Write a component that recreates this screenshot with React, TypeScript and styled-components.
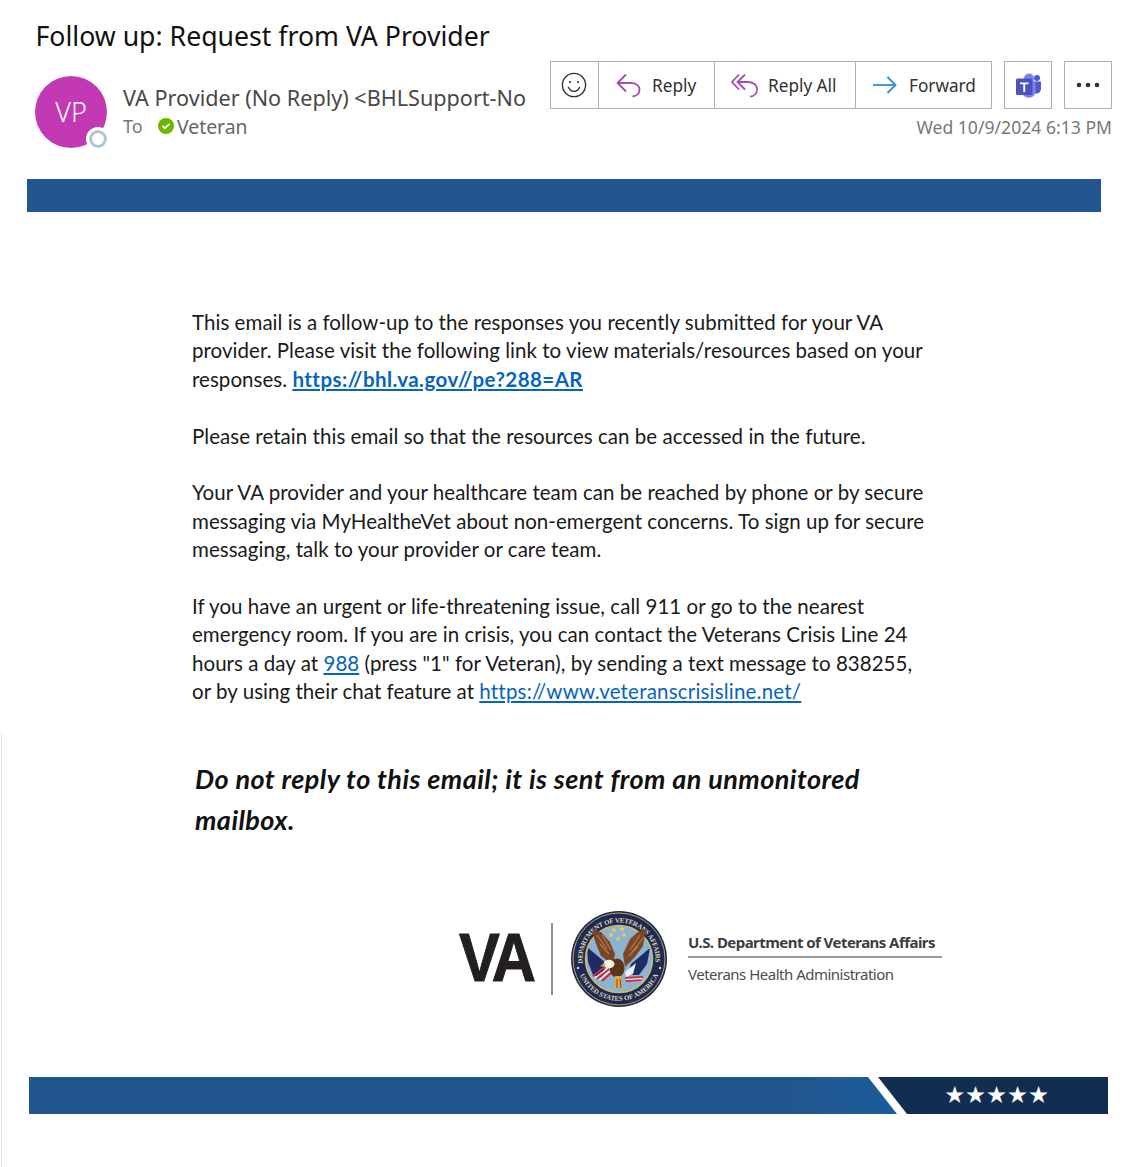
import { FC } from 'react'
import styled, { createGlobalStyle } from 'styled-components'

const GlobalStyle = createGlobalStyle`
  * { box-sizing: border-box; }
  html, body { margin: 0; padding: 0; background: #fff; }
  body { font-family: "Noto Sans", "Open Sans", sans-serif; }
`

const SmileIcon: FC = () => (
  <svg width="26" height="26" viewBox="0 0 26 26" fill="none" stroke="#323130" strokeWidth="1.4">
    <circle cx="13" cy="13" r="11.6" />
    <circle cx="9" cy="10" r="1.1" fill="#323130" stroke="none" />
    <circle cx="17" cy="10" r="1.1" fill="#323130" stroke="none" />
    <path d="M7.5 15.5c1.2 2.6 3.2 3.8 5.5 3.8s4.300-1.200 5.500-3.800" strokeLinecap="round" />
  </svg>
)

const ReplyIcon: FC = () => (
  <svg width="25" height="25" viewBox="0 0 25 25" fill="none" stroke="#a64ab5" strokeWidth="1.8">
    <path d="M10 1.500 1.500 10l8.500 8.500" />
    <path d="M1.500 10h13c5 0 9 2.400 9 6.800 0 3.700-3 6.300-7 6.700" />
  </svg>
)

const ReplyAllIcon: FC = () => (
  <svg width="27" height="25" viewBox="0 0 27 25" fill="none" stroke="#a64ab5" strokeWidth="1.8">
    <path d="M8 1.500 1 9l7 7.500" />
    <path d="M14 1.500 6.500 9l7.500 7.500" />
    <path d="M6.500 9h10c5.500 0 9.500 2.800 9.500 7.500 0 4-3 6.800-7 7.200" />
  </svg>
)

const ForwardIcon: FC = () => (
  <svg width="24" height="18" viewBox="0 0 24 18" fill="none" stroke="#2b8fd6" strokeWidth="1.8">
    <path d="M0 9h22.500" />
    <path d="M14.500 1l8 8-8 8" />
  </svg>
)

const TeamsIcon: FC = () => (
  <svg width="25" height="25" viewBox="0 0 25 25">
    <circle cx="21" cy="5" r="3" fill="#5059c9" />
    <path d="M16 8.500h8c.6 0 1 .4 1 1v6c0 3-2.200 5-4.500 5S16 18.500 16 16z" fill="#5059c9" />
    <circle cx="13" cy="5.500" r="5" fill="#7b83eb" />
    <path d="M6 8.500h13.500v10c0 3.500-3 6.200-6.700 6.200S6 22 6 18.500z" fill="#7b83eb" />
    <rect x="0" y="5.500" width="16.500" height="16.500" rx="1.500" fill="#4b53bc" />
    <path d="M4 9.500h8.500v1.700H9.200V19H7.300v-7.800H4z" fill="#fff" />
  </svg>
)

const DotsIcon: FC = () => (
  <svg width="24" height="6" viewBox="0 0 24 6" fill="#323130">
    <circle cx="3" cy="3" r="2.300" />
    <circle cx="12" cy="3" r="2.300" />
    <circle cx="21" cy="3" r="2.300" />
  </svg>
)

const starPoints = (cx: number, cy: number, r: number) =>
  Array.from({ length: 10 }, (_, i) => {
    const rad = i % 2 === 0 ? r : r * 0.42
    const a = (Math.PI / 5) * i - Math.PI / 2
    return `${(cx + rad * Math.cos(a)).toFixed(2)},${(cy + rad * Math.sin(a)).toFixed(2)}`
  }).join(' ')

const Seal: FC = () => (
  <svg width="96" height="102" viewBox="0 0 96 102">
    <defs>
      <path id="sealTop" d="M12.050 57.300A36.500 36.500 0 1 1 83.950 57.300" />
      <path id="sealBottom" d="M8.300 65.500A42.500 42.500 0 0 0 87.700 65.500" />
      <clipPath id="sealField">
        <circle cx="48" cy="51" r="32.500" />
      </clipPath>
    </defs>
    <circle cx="48" cy="51" r="48" fill="#1b2a57" />
    <circle cx="48" cy="51" r="46" fill="none" stroke="#c4a545" strokeWidth="1" />
    <circle cx="48" cy="51" r="33.500" fill="#8db3d2" stroke="#d3bb62" strokeWidth="1.500" />
    <text fontFamily="Liberation Serif, serif" fontSize="6.800" fontWeight="700" fill="#e8dca6">
      <textPath href="#sealTop" startOffset="2" textLength="122">
        DEPARTMENT OF VETERANS AFFAIRS
      </textPath>
    </text>
    <text fontFamily="Liberation Serif, serif" fontSize="6.800" fontWeight="700" fill="#e8dca6" textAnchor="middle">
      <textPath href="#sealBottom" startOffset="50%">
        UNITED STATES OF AMERICA
      </textPath>
    </text>
    <circle cx="7" cy="60" r="1.200" fill="#e8dca6" />
    <circle cx="89" cy="60" r="1.200" fill="#e8dca6" />
    {[
      [43, 22],
      [51, 21],
      [40, 27],
      [53, 27],
      [47, 31],
    ].map(([x, y]) => (
      <polygon key={`${x}-${y}`} points={starPoints(x, y, 2.800)} fill="#ecd34f" />
    ))}
    <g clipPath="url(#sealField)">
      <polygon points="16,39 35,55 31,70 22,67 17,54" fill="#1e2b66" />
      <polygon points="79,40 76,56 68,67 57,67 60,56" fill="#1e2b66" />
      <path d="M22 68l13-10M26 71l12-10M31 73l10-9" stroke="#c9303a" strokeWidth="2.200" />
      <path d="M24 70l13-10M28 72l12-10" stroke="#f3f1f0" strokeWidth="1.400" />
      <path d="M54 70l18-1M55 73l15-1" stroke="#c9303a" strokeWidth="2" />
      <path d="M55 71.500l16-1" stroke="#f3f1f0" strokeWidth="1" />
    </g>
    <polygon points="21,23 30,24 39,34 44,46 42,57 30,48 25,36" fill="#7a4524" />
    <polygon points="75,21 72,38 64,49 54,59 52,46 59,31 67,24" fill="#7d4726" />
    <path d="M26 27l10 14M31 27l9 15M29 36l9 10M69 27l-10 15M73 29l-12 15M67 38l-9 10" stroke="#b27a4c" strokeWidth="1.200" />
    <ellipse cx="46" cy="60" rx="7.500" ry="9.500" fill="#5e3319" />
    <ellipse cx="38" cy="56" rx="5.500" ry="4.200" fill="#f4f1ea" />
    <polygon points="34,55 29,58 34,59" fill="#d9a92e" />
    <polygon points="54,64 65,55 62,66 55,69" fill="#eef1f4" />
    <polygon points="44,68 50,68 52,83 47,77 43,82" fill="#d8ae3a" />
    <path d="M46 71v9M49 71l1 9" stroke="#b3282f" strokeWidth="1" />
  </svg>
)

const App: FC = () => (
  <Page>
    <GlobalStyle />
    <Title>Follow up: Request from VA Provider</Title>
    <Header>
      <Avatar>
        VP
        <Presence />
      </Avatar>
      <Sender>
        <SenderName>VA Provider (No Reply) &lt;BHLSupport-No</SenderName>
        <Recipients>
          <ToLabel>To</ToLabel>
          <CheckBadge>
            <svg width="10" height="8" viewBox="0 0 10 8" fill="none" stroke="#fff" strokeWidth="1.800">
              <path d="M1.500 4l2.400 2.200L8.500 2" />
            </svg>
          </CheckBadge>
          <Recipient>Veteran</Recipient>
        </Recipients>
      </Sender>
      <Actions>
        <Toolbar>
          <ButtonGroup>
            <IconButton aria-label="Emoji">
              <SmileIcon />
            </IconButton>
            <ActionButton $width={116} $pad={17} $gap={11}>
              <ReplyIcon />
              Reply
            </ActionButton>
            <ActionButton $width={141} $pad={16} $gap={10}>
              <ReplyAllIcon />
              Reply All
            </ActionButton>
            <ActionButton $width={136} $pad={17} $gap={12}>
              <ForwardIcon />
              Forward
            </ActionButton>
          </ButtonGroup>
          <SingleButton aria-label="Teams">
            <TeamsIcon />
          </SingleButton>
          <SingleButton aria-label="More">
            <DotsIcon />
          </SingleButton>
        </Toolbar>
        <DateText>Wed 10/9/2024 6:13 PM</DateText>
      </Actions>
    </Header>
    <TopBanner />
    <Message>
      <Paragraph>
        This email is a follow-up to the responses you recently submitted for your VA
        <br />
        provider. Please visit the following link to view materials/resources based on your
        <br />
        responses. <BoldLink href="#">https://bhl.va.gov//pe?288=AR</BoldLink>
      </Paragraph>
      <Paragraph>Please retain this email so that the resources can be accessed in the future.</Paragraph>
      <Paragraph>
        Your VA provider and your healthcare team can be reached by phone or by secure
        <br />
        messaging via MyHealtheVet about non-emergent concerns. To sign up for secure
        <br />
        messaging, talk to your provider or care team.
      </Paragraph>
      <Paragraph>
        If you have an urgent or life-threatening issue, call 911 or go to the nearest
        <br />
        emergency room. If you are in crisis, you can contact the Veterans Crisis Line 24
        <br />
        hours a day at <TextLink href="#">988</TextLink> (press "1" for Veteran), by sending a text message to 838255,
        <br />
        or by using their chat feature at <UrlLink href="#">https://www.veteranscrisisline.net/</UrlLink>
      </Paragraph>
    </Message>
    <LowerSection>
      <Warning>
        Do not reply to this email; it is sent from an unmonitored
        <br />
        mailbox.
      </Warning>
      <LogoRow>
        <VaMark>VA</VaMark>
        <LogoDivider />
        <Seal />
        <LogoText>
          <Department>U.S. Department of Veterans Affairs</Department>
          <Administration>Veterans Health Administration</Administration>
        </LogoText>
      </LogoRow>
      <BottomBanner>
        <BannerSlash />
        <BannerBlue />
        <Stars>★★★★★</Stars>
      </BottomBanner>
    </LowerSection>
  </Page>
)

export default App

const Page = styled.div`
  width: 1128px;
  height: 1167px;
  padding-top: 18px;
  overflow: hidden;
  background: #fff;
`

const Title = styled.h1`
  margin: 0 0 7px 35.500px;
  font-size: 26.65px;
  line-height: 36px;
  font-weight: 400;
  color: #111;
`

const Header = styled.div`
  display: flex;
  align-items: flex-start;
  padding: 0 16px 0 35px;
`

const Avatar = styled.div`
  position: relative;
  flex: none;
  width: 72px;
  height: 72px;
  margin-top: 15px;
  border-radius: 50%;
  background: #c239b3;
  color: #fff;
  font-size: 27px;
  font-weight: 300;
  line-height: 72px;
  text-align: center;
`

const Presence = styled.span`
  position: absolute;
  right: -3px;
  bottom: -3px;
  width: 24px;
  height: 24px;
  border-radius: 50%;
  border: 3px solid #fff;
  background: #fff;
  box-shadow: inset 0 0 0 3px #a9c5d3;
`

const Sender = styled.div`
  width: 403px;
  margin: 23px 24px 0 16px;
`

const SenderName = styled.div`
  font-size: 21.6px;
  line-height: 28px;
  font-weight: 400;
  color: #494846;
  white-space: nowrap;
`

const Recipients = styled.div`
  display: flex;
  align-items: center;
  height: 26px;
  margin-top: 1px;
`

const ToLabel = styled.span`
  width: 35px;
  font-size: 18px;
  color: #797775;
`

const CheckBadge = styled.span`
  display: flex;
  align-items: center;
  justify-content: center;
  width: 16px;
  height: 16px;
  margin-right: 3px;
  border-radius: 50%;
  background: #6bb700;
`

const Recipient = styled.span`
  font-size: 19.4px;
  color: #666;
`

const Actions = styled.div`
  display: flex;
  flex-direction: column;
  align-items: flex-end;
  width: 562px;
`

const Toolbar = styled.div`
  display: flex;
  gap: 12px;
`

const ButtonGroup = styled.div`
  display: flex;
  height: 48px;
  border: 1px solid #b3b0ad;
`

const BaseButton = styled.button`
  display: flex;
  align-items: center;
  justify-content: center;
  padding: 0;
  background: #fff;
  font-family: inherit;
  color: #323130;
`

const IconButton = styled(BaseButton)`
  width: 47px;
  padding-right: 2px;
  border: 0;
`

const ActionButton = styled(BaseButton)<{ $width: number; $pad: number; $gap: number }>`
  justify-content: flex-start;
  width: ${(p) => p.$width}px;
  padding-left: ${(p) => p.$pad}px;
  gap: ${(p) => p.$gap}px;
  border: 0;
  border-left: 1px solid #b3b0ad;
  font-size: 17.2px;
`

const SingleButton = styled(BaseButton)`
  width: 48px;
  height: 48px;
  border: 1px solid #b3b0ad;
`

const DateText = styled.div`
  margin-top: 7px;
  font-size: 17.6px;
  line-height: 22px;
  color: #797775;
`

const TopBanner = styled.div`
  width: 1074px;
  height: 33px;
  margin: 31px 0 0 27px;
  background: #22568f;
`

const Message = styled.div`
  padding: 96px 0 0 192px;
  font-family: "Lato", sans-serif;
  font-size: 20.5px;
  line-height: 28.4px;
  letter-spacing: 0.04px;
  color: #1a1a1a;
`

const Paragraph = styled.p`
  margin: 0 0 28.4px;
  white-space: nowrap;
`

const TextLink = styled.a`
  color: #0563c1;
  text-decoration: underline;
`

const BoldLink = styled(TextLink)`
  font-weight: 700;
  letter-spacing: 0.45px;
`

const UrlLink = styled(TextLink)`
  letter-spacing: 0.2px;
`

const LowerSection = styled.div`
  margin: 0 0 0 1px;
  padding-top: 24px;
  height: 434px;
  border-left: 1px solid #e8e8e8;
`

const Warning = styled.div`
  margin-left: 193px;
  font-family: "Lato", sans-serif;
  font-size: 27px;
  font-weight: 700;
  font-style: italic;
  line-height: 41px;
  letter-spacing: 0.45px;
  color: #111;
  white-space: nowrap;
`

const LogoRow = styled.div`
  display: flex;
  align-items: center;
  height: 102px;
  margin: 68px 0 67px 457px;
`

const VaMark = styled.div`
  width: 80px;
  margin-top: -4px;
  font-family: "Liberation Sans", sans-serif;
  font-size: 68px;
  font-weight: 700;
  letter-spacing: -4px;
  color: #231f20;
  -webkit-text-stroke: 1px #231f20;
  transform: scaleX(0.9);
  transform-origin: left center;
`

const LogoDivider = styled.div`
  width: 2px;
  height: 72px;
  margin: 0 18px 0 12px;
  background: #8f8f8f;
`

const LogoText = styled.div`
  width: 254px;
  margin: -2px 0 0 21px;
  font-family: "Noto Sans", sans-serif;
`

const Department = styled.div`
  padding-bottom: 4px;
  border-bottom: 2px solid #9a9a9a;
  font-size: 15px;
  line-height: 20px;
  font-weight: 700;
  letter-spacing: -0.55px;
  color: #3d3d3f;
  white-space: nowrap;
`

const Administration = styled.div`
  margin-top: 5px;
  font-size: 15px;
  line-height: 22px;
  letter-spacing: -0.5px;
  color: #4c4c4e;
  white-space: nowrap;
`

const BottomBanner = styled.div`
  position: relative;
  display: flex;
  align-items: center;
  justify-content: flex-end;
  width: 1079px;
  height: 37px;
  margin-left: 27px;
  padding-right: 59px;
  background: #112e51;
`

const BannerSlash = styled.div`
  position: absolute;
  left: 0;
  top: 0;
  bottom: 0;
  width: 878px;
  background: #fff;
  clip-path: polygon(0 0, 849px 0, 878px 100%, 0 100%);
`

const BannerBlue = styled.div`
  position: absolute;
  left: 0;
  top: 0;
  bottom: 0;
  width: 868px;
  background: linear-gradient(90deg, #22568f 0, #22568f 88%, #1b5c9b 100%);
  clip-path: polygon(0 0, 839px 0, 868px 100%, 0 100%);
`

const Stars = styled.div`
  font-family: "DejaVu Sans", sans-serif;
  font-size: 23.4px;
  line-height: 37px;
  color: #fff;
`
